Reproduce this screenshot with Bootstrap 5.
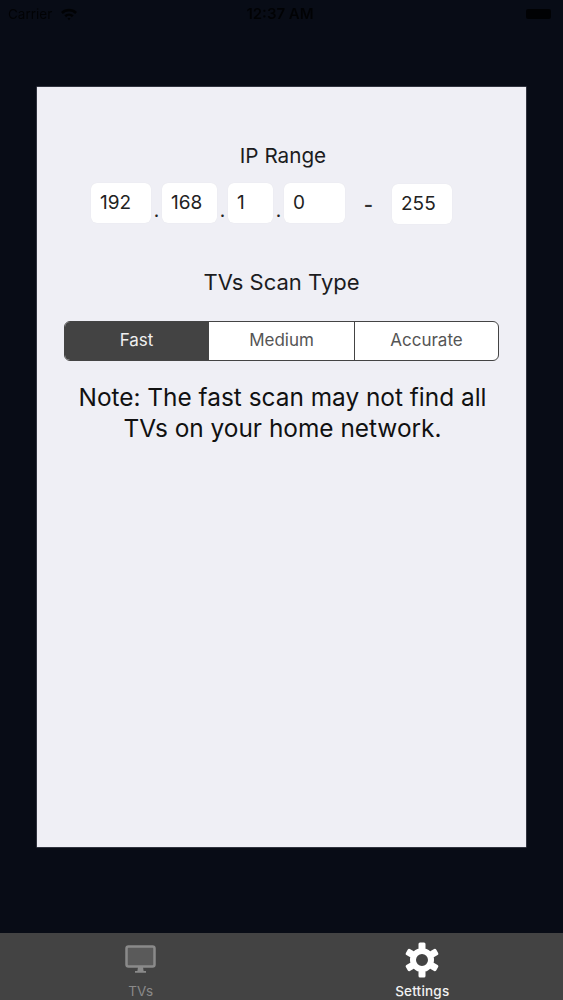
<!doctype html>
<html lang="en">
<head>
<meta charset="utf-8">
<title>Settings</title>
<link href="https://cdn.jsdelivr.net/npm/bootstrap@5.3.0/dist/css/bootstrap.min.css" rel="stylesheet">
<style>
html,body{height:1000px;overflow:hidden}
body{background:#080c16;font-family:Inter,"Liberation Sans",sans-serif;color:#1c1c1e}
.app-shell{width:563px;height:1000px}
.status-row{height:87px;padding:5px 11px 0 8px;color:#000;font-size:13.5px;line-height:18px;filter:blur(.7px);opacity:.8}
.status-side{width:120px}
.status-time{font-weight:600;font-size:15px}
.batt{width:25px;height:10px;background:#000;border-radius:2px;margin-right:1px}
.stage-wrap{height:846px;padding-left:37px}
.panel{width:489px;height:760px;padding-top:57px;background:#efeff5;box-shadow:0 0 0 .5px #5a5d68}
.ip-title{font-size:20.7px;line-height:24px;text-align:center;width:100%;padding-left:3px}
.ip-row{margin-top:15px;padding-left:54px;height:42px}
.ip-box{height:40px;background:#fff;border-radius:6px;font-size:19px;line-height:39px;padding-left:9px;color:#222;box-shadow:0 0 1px rgba(0,0,0,.08)}
.w1{width:60px}.w2{width:55px}.w3{width:45px}.w4{width:61px}.w5{width:60px;margin-top:1px}
.ip-dot{width:11px;height:40px;font-size:19px;line-height:56px;text-align:center;color:#222}
.ip-dash{width:47px;text-align:center;font-size:20px;line-height:44px;color:#333;font-weight:600}
.scan-title{font-size:22px;line-height:26px;margin-top:44px;text-align:center;width:100%}
.seg{margin:26px 0 0 27px;width:435px;height:40px;border:1.5px solid #444;border-radius:6px;overflow:hidden;background:#fff}
.seg-item{flex:1 1 0;font-size:17px;line-height:37px;text-align:center;color:#555;border-left:1.5px solid #444}
.seg-item:first-child{flex:0 0 143px;border-left:0;background:#434343;color:#efefef}
.seg-item:last-child{flex:0 0 144px}
.note{font-size:24.4px;line-height:31px;margin-top:21px;text-align:center;color:#111;padding:0 8px 0 10px}
.tabbar{height:67px;background:#434343}
.tab-slot{width:281.5px;height:67px;padding-top:8px}
.tab-slot svg{display:block;height:38px}
.tab-label{font-size:13.5px;line-height:16px;margin-top:4px;letter-spacing:.2px}
.tab-off{color:#8a8a8a}
.tab-on{color:#f2f2f2;font-weight:500}
</style>
</head>
<body>
<div class="app-shell d-flex flex-column">
  <div class="status-row d-flex justify-content-between align-items-start">
    <div class="status-side d-flex align-items-center gap-2">
      <span>Carrier</span>
      <svg width="18" height="14" viewBox="0 0 18 14" aria-hidden="true"><path d="M1 5a11.500 11.500 0 0 1 16 0l-1.800 1.900a9 9 0 0 0-12.400 0zM4.300 8.300a6.800 6.800 0 0 1 9.400 0l-1.800 1.900a4.200 4.200 0 0 0-5.800 0zM7.500 11.500a2.200 2.200 0 0 1 3 0L9 13.200z" fill="#000"/></svg>
    </div>
    <div class="status-time">12:37 AM</div>
    <div class="status-side d-flex justify-content-end pt-1"><div class="batt"></div></div>
  </div>
  <div class="stage-wrap">
    <div class="panel">
      <div class="ip-title">IP Range</div>
      <div class="ip-row d-flex align-items-start">
        <div class="ip-box w1">192</div><div class="ip-dot">.</div>
        <div class="ip-box w2">168</div><div class="ip-dot">.</div>
        <div class="ip-box w3">1</div><div class="ip-dot">.</div>
        <div class="ip-box w4">0</div>
        <div class="ip-dash">-</div>
        <div class="ip-box w5">255</div>
      </div>
      <div class="scan-title">TVs Scan Type</div>
      <div class="seg d-flex">
        <div class="seg-item">Fast</div>
        <div class="seg-item">Medium</div>
        <div class="seg-item">Accurate</div>
      </div>
      <div class="note">Note: The fast scan may not find all<br>TVs on your home network.</div>
    </div>
  </div>
  <div class="tabbar d-flex">
    <div class="tab-slot d-flex flex-column align-items-center">
      <svg width="32" height="38" viewBox="0 0 32 38" aria-hidden="true">
        <rect x="1.500" y="5.500" width="28" height="20" rx="2" fill="#5a5a5a" stroke="#8a8a8a" stroke-width="2.500"/>
        <path d="M13 26h5l.6 4h2.400v1.800H10V30h2.400z" fill="#8a8a8a"/>
      </svg>
      <div class="tab-label tab-off">TVs</div>
    </div>
    <div class="tab-slot d-flex flex-column align-items-center">
      <svg width="38" height="38" viewBox="0 0 38 38" aria-hidden="true">
        <g fill="#fff">
          <path fill-rule="evenodd" d="M19 7a12 12 0 1 0 0 24a12 12 0 0 0 0-24zm0 6a6 6 0 1 1 0 12a6 6 0 0 1 0-12z"/>
          <rect x="15.500" y="1.500" width="7" height="7" rx="1.500"/>
          <rect x="15.500" y="29.500" width="7" height="7" rx="1.500"/>
          <rect x="15.500" y="1.500" width="7" height="7" rx="1.500" transform="rotate(60 19 19)"/>
          <rect x="15.500" y="29.500" width="7" height="7" rx="1.500" transform="rotate(60 19 19)"/>
          <rect x="15.500" y="1.500" width="7" height="7" rx="1.500" transform="rotate(120 19 19)"/>
          <rect x="15.500" y="29.500" width="7" height="7" rx="1.500" transform="rotate(120 19 19)"/>
        </g>
      </svg>
      <div class="tab-label tab-on">Settings</div>
    </div>
  </div>
</div>
<script src="https://cdn.jsdelivr.net/npm/bootstrap@5.3.0/dist/js/bootstrap.bundle.min.js"></script>
</body>
</html>
